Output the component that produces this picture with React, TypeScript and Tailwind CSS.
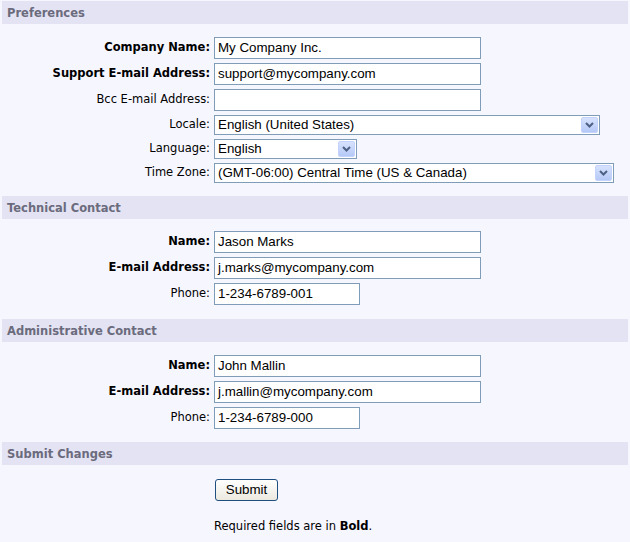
import React from "react";

const labelFont = { fontFamily: '"DejaVu Sans", Verdana, sans-serif' };

function Bar({ title }: { title: string }) {
  return (
    <div className="mx-[2px] h-[23px] bg-[#e3e3f3] flex items-center pl-[5px] pt-[2px] text-[11.5px] font-bold text-[#6b6b7d]" style={labelFont}>
      {title}
    </div>
  );
}

function Label({ text, bold }: { text: string; bold?: boolean }) {
  return (
    <div className={`w-[210px] shrink-0 text-right text-[11.5px] text-black ${bold ? "font-bold" : ""}`} style={labelFont}>
      {text}
    </div>
  );
}

function Input({ value, w }: { value: string; w: string }) {
  return (
    <div className={`ml-[4px] h-[22px] ${w} border border-[#7f9db9] bg-white flex items-center pl-[3px] text-[13.33px] text-black font-['Liberation_Sans',Arial,sans-serif] whitespace-nowrap overflow-hidden`}>
      {value}
    </div>
  );
}

function Arrow() {
  return (
    <div className="h-[16px] w-[17px] mr-[1px] rounded-[2px] border border-[#c3d3fd] bg-gradient-to-b from-[#d7e2fd] to-[#b5c9f7] flex items-center justify-center">
      <svg width="9" height="6" viewBox="0 0 9 6">
        <path d="M1 1 L4.5 4.5 L8 1" stroke="#4d6185" strokeWidth="2" fill="none" />
      </svg>
    </div>
  );
}

function Select({ value, w }: { value: string; w: string }) {
  return (
    <div className={`ml-[4px] h-[20px] ${w} border border-[#7f9db9] bg-white flex items-center justify-between pl-[3px] text-[13.33px] text-black font-['Liberation_Sans',Arial,sans-serif] whitespace-nowrap`}>
      <span>{value}</span>
      <Arrow />
    </div>
  );
}

function Row({ children }: { children: React.ReactNode }) {
  return <div className="flex items-center">{children}</div>;
}

export default function App() {
  return (
    <div className="w-[630px] h-[542px] bg-[#f6f6ff] pt-[1px]">
      <Bar title="Preferences" />
      <div className="pt-[13px] pb-[13px] flex flex-col gap-[4px]">
        <Row>
          <Label text="Company Name:" bold />
          <Input value="My Company Inc." w="w-[267px]" />
        </Row>
        <Row>
          <Label text="Support E-mail Address:" bold />
          <Input value="support@mycompany.com" w="w-[267px]" />
        </Row>
        <Row>
          <Label text="Bcc E-mail Address:" />
          <Input value="" w="w-[267px]" />
        </Row>
        <Row>
          <Label text="Locale:" />
          <Select value="English (United States)" w="w-[386px]" />
        </Row>
        <Row>
          <Label text="Language:" />
          <Select value="English" w="w-[143px]" />
        </Row>
        <Row>
          <Label text="Time Zone:" />
          <Select value="(GMT-06:00) Central Time (US & Canada)" w="w-[400px]" />
        </Row>
      </div>

      <Bar title="Technical Contact" />
      <div className="pt-[12px] pb-[14px] flex flex-col gap-[4px]">
        <Row>
          <Label text="Name:" bold />
          <Input value="Jason Marks" w="w-[267px]" />
        </Row>
        <Row>
          <Label text="E-mail Address:" bold />
          <Input value="j.marks@mycompany.com" w="w-[267px]" />
        </Row>
        <Row>
          <Label text="Phone:" />
          <Input value="1-234-6789-001" w="w-[146px]" />
        </Row>
      </div>

      <Bar title="Administrative Contact" />
      <div className="pt-[13px] pb-[13px] flex flex-col gap-[4px]">
        <Row>
          <Label text="Name:" bold />
          <Input value="John Mallin" w="w-[267px]" />
        </Row>
        <Row>
          <Label text="E-mail Address:" bold />
          <Input value="j.mallin@mycompany.com" w="w-[267px]" />
        </Row>
        <Row>
          <Label text="Phone:" />
          <Input value="1-234-6789-000" w="w-[146px]" />
        </Row>
      </div>

      <Bar title="Submit Changes" />
      <div className="flex pl-[215px] pt-[14px]">
        <button className="h-[22px] w-[63px] rounded-[3px] border border-[#1f4f7f] bg-gradient-to-b from-white to-[#ebe9df] text-[13.33px] text-black font-['Liberation_Sans',Arial,sans-serif]">
          Submit
        </button>
      </div>
      <div className="pl-[214px] pt-[17px] text-[11.5px] text-black" style={labelFont}>
        Required fields are in <b>Bold</b>.
      </div>
    </div>
  );
}
